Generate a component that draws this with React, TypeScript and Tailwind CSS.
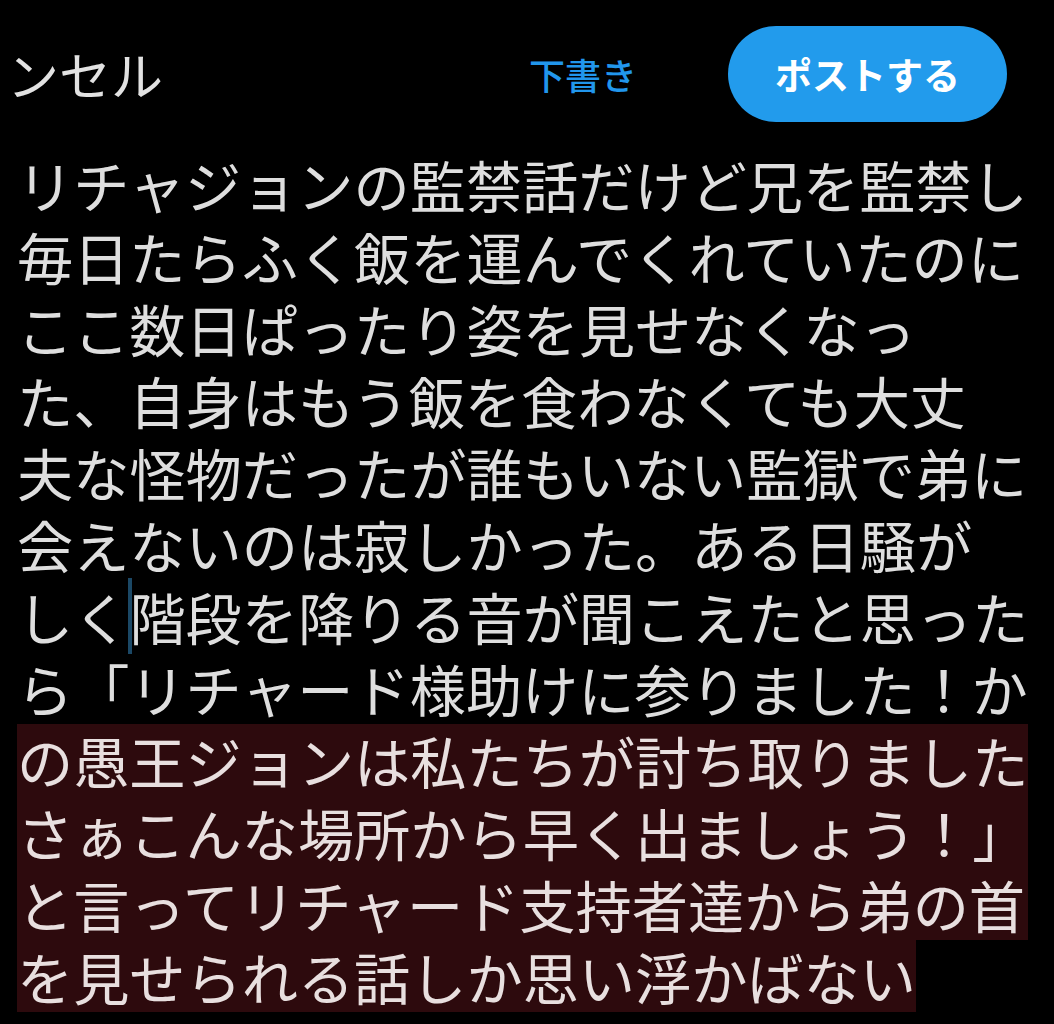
import React from "react";

const lines: { t: string; hl?: string }[] = [
  { t: "リチャジョンの監禁話だけど兄を監禁し" },
  { t: "毎日たらふく飯を運んでくれていたのに" },
  { t: "ここ数日ぱったり姿を見せなくなっ" },
  { t: "た、自身はもう飯を食わなくても大丈" },
  { t: "夫な怪物だったが誰もいない監獄で弟に" },
  { t: "会えないのは寂しかった。ある日騒が" },
  { t: "CURSOR" },
  { t: "ら「リチャード様助けに参りました！か" },
  { t: "の愚王ジョンは私たちが討ち取りました", hl: "full" },
  { t: "さぁこんな場所から早く出ましょう！」", hl: "full" },
  { t: "と言ってリチャード支持者達から弟の首", hl: "full" },
  { t: "を見せられる話しか思い浮かばない", hl: "part" },
];

export default function App() {
  return (
    <div
      className="w-[1054px] h-[1024px] bg-black overflow-hidden"
      style={{ fontFamily: '"Noto Sans CJK JP", "Noto Sans", sans-serif' }}
    >
      <div className="flex items-center h-[148px] pl-[7px] pr-[47px]">
        <span className="text-[52px] leading-none text-[#e2e2e2]">ンセル</span>
        <div className="flex-1" />
        <span className="text-[36px] leading-none font-medium text-[#2196ec] mr-[91px]">下書き</span>
        <button className="w-[279px] h-[96px] rounded-full bg-[#229bec] text-white text-[37px] font-bold leading-none flex items-center justify-center">
          ポストする
        </button>
      </div>
      <div className="pl-[17px] text-[56.2px] leading-[72px] text-[#dedede]">
        {lines.map((l, i) =>
          l.t === "CURSOR" ? (
            <div key={i} className="h-[72px] whitespace-nowrap">
              しく
              <span className="relative inline-block w-0 h-[72px] align-top">
                <span className="absolute left-[-1px] top-[-2px] w-[4px] h-[76px] bg-[#1b4866]" />
              </span>
              階段を降りる音が聞こえたと思った
            </div>
          ) : l.hl ? (
            <div
              key={i}
              className={
                l.hl === "full"
                  ? "h-[72px] w-[1011px] whitespace-nowrap bg-[#2d0a0d] text-[#e8dfdf]"
                  : "h-[72px] w-[899px] whitespace-nowrap bg-[#2d0a0d] text-[#e8dfdf]"
              }
            >
              {l.t}
            </div>
          ) : (
            <div key={i} className="h-[72px] whitespace-nowrap">
              {l.t}
            </div>
          )
        )}
      </div>
    </div>
  );
}
